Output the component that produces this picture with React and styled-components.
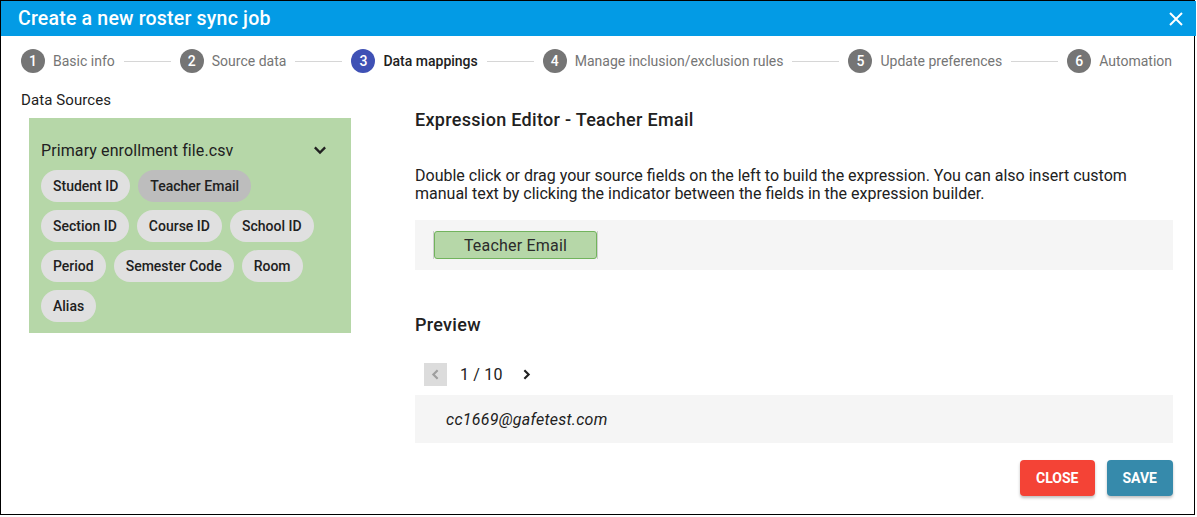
import React from 'react';
import styled, { createGlobalStyle } from 'styled-components';

const GlobalStyle = createGlobalStyle`
  * { box-sizing: border-box; }
  body {
    margin: 0;
    font-family: Roboto, "Liberation Sans", Arial, sans-serif;
    background: #fff;
    color: #212121;
  }
`;

const Dialog = styled.div`
  width: 1195px;
  height: 515px;
  border: 1px solid #000;
  display: flex;
  flex-direction: column;
  background: #fff;
`;

const Header = styled.div`
  height: 35px;
  background: #039be5;
  display: flex;
  align-items: center;
  justify-content: space-between;
  padding: 0 12px 0 17px;
  margin-right: -2px;
`;

const Title = styled.h1`
  margin: 0;
  font-size: 19.5px;
  font-weight: 500;
  letter-spacing: 0.2px;
  color: #fff;
`;

const CloseIcon = styled.button`
  border: 0;
  background: none;
  padding: 0;
  width: 16px;
  height: 16px;
  display: flex;
  cursor: pointer;
`;

const Stepper = styled.div`
  height: 50px;
  display: flex;
  align-items: center;
  padding: 0 22px 0 20px;
`;

const Step = styled.div`
  display: flex;
  align-items: center;
  gap: 8px;
  white-space: nowrap;
`;

const StepIcon = styled.span`
  width: 24px;
  height: 24px;
  border-radius: 50%;
  background: ${p => (p.active ? '#3f51b5' : '#757575')};
  color: #fff;
  font-size: 14px;
  font-weight: 500;
  display: flex;
  align-items: center;
  justify-content: center;
`;

const StepLabel = styled.span`
  font-size: 14px;
  font-weight: ${p => (p.active ? 500 : 400)};
  color: ${p => (p.active ? '#212121' : '#757575')};
`;

const Connector = styled.span`
  height: 1px;
  background: #d6d6d6;
  flex: 1 1 0;
  margin: 0 9px;
`;

const Body = styled.div`
  flex: 1;
  display: flex;
  padding: 0 21px 0 20px;
`;

const Sidebar = styled.div`
  width: 330px;
  padding-top: 5px;
`;

const SidebarTitle = styled.div`
  font-size: 15px;
  line-height: 18px;
  letter-spacing: 0.1px;
  margin-bottom: 9px;
`;

const SourcePanel = styled.div`
  margin-left: 8px;
  height: 215px;
  background: #b6d7a8;
  padding: 20px 12px 0;
`;

const SourceHeader = styled.div`
  display: flex;
  align-items: center;
  justify-content: space-between;
  height: 24px;
  margin-bottom: 8px;
  padding-right: 10px;
  font-size: 16px;
  letter-spacing: 0.1px;
  color: #212121;
`;

const ChipList = styled.div`
  display: flex;
  flex-wrap: wrap;
  gap: 8px 8px;
  padding-right: 20px;
`;

const Chip = styled.span`
  height: 32px;
  border-radius: 16px;
  padding: 0 12px;
  display: inline-flex;
  align-items: center;
  font-size: 14px;
  font-weight: 500;
  color: #212121;
  background: ${p => (p.selected ? '#bdbdbd' : '#e0e0e0')};
`;

const Main = styled.div`
  flex: 1;
  margin-left: 64px;
  padding-top: 22px;
  display: flex;
  flex-direction: column;
`;

const SectionTitle = styled.h2`
  margin: 0;
  font-size: 18px;
  line-height: 24px;
  font-weight: 500;
  letter-spacing: 0.3px;
  color: #212121;
`;

const Description = styled.p`
  margin: 35px 0 17px;
  font-size: 16px;
  line-height: 18px;
  color: #212121;
`;

const ExpressionBox = styled.div`
  height: 50px;
  background: #f5f5f5;
  display: flex;
  align-items: center;
  padding-left: 18px;
`;

const Indicator = styled.span`
  width: 1px;
  height: 28px;
  background: #cfcfcf;
`;

const ExpressionToken = styled.span`
  width: 163px;
  height: 28px;
  border: 1px solid #72b35d;
  border-radius: 3px;
  background: #b6d7a8;
  display: flex;
  align-items: center;
  justify-content: center;
  font-size: 16px;
  letter-spacing: 0.2px;
  color: #2b2b2b;
`;

const PreviewTitle = styled(SectionTitle)`
  margin-top: 43px;
`;

const Pager = styled.div`
  display: flex;
  align-items: center;
  margin: 26px 0 9px 9px;
  height: 23px;
`;

const PagerButton = styled.button`
  width: 23px;
  height: 23px;
  border: 0;
  padding: 0;
  display: flex;
  align-items: center;
  justify-content: center;
  background: ${p => (p.disabled ? '#dcdcdc' : 'transparent')};
  cursor: pointer;
`;

const PagerText = styled.span`
  font-size: 16px;
  letter-spacing: 0.2px;
  color: #212121;
  margin: 0 12px 0 13px;
`;

const PreviewBox = styled.div`
  height: 48px;
  background: #f5f5f5;
  display: flex;
  align-items: center;
  padding-left: 31px;
  font-size: 16px;
  font-style: italic;
  letter-spacing: 0.25px;
  color: #212121;
`;

const Actions = styled.div`
  display: flex;
  justify-content: flex-end;
  gap: 12px;
  margin-top: 17px;
`;

const ActionButton = styled.button`
  height: 36px;
  padding: 0 16px;
  border: 0;
  border-radius: 4px;
  background: ${p => p.color};
  color: #fff;
  font-family: inherit;
  font-size: 14px;
  font-weight: 700;
  text-transform: uppercase;
  box-shadow: 0 2px 3px rgba(0, 0, 0, 0.25);
  cursor: pointer;
`;

const steps = [
  { label: 'Basic info' },
  { label: 'Source data' },
  { label: 'Data mappings', active: true },
  { label: 'Manage inclusion/exclusion rules' },
  { label: 'Update preferences' },
  { label: 'Automation' },
];

const fields = [
  'Student ID',
  'Teacher Email',
  'Section ID',
  'Course ID',
  'School ID',
  'Period',
  'Semester Code',
  'Room',
  'Alias',
];

const Chevron = ({ dir, color = '#212121', size = 14, weight = 2 }) => {
  const d = {
    down: 'M3 5 L7 9 L11 5',
    left: 'M9 3 L5 7 L9 11',
    right: 'M5 3 L9 7 L5 11',
  }[dir];
  return (
    <svg width={size} height={size} viewBox="0 0 14 14">
      <path d={d} fill="none" stroke={color} strokeWidth={weight} />
    </svg>
  );
};

export default function App() {
  return (
    <>
      <GlobalStyle />
      <Dialog>
        <Header>
          <Title>Create a new roster sync job</Title>
          <CloseIcon aria-label="close">
            <svg width="16" height="16" viewBox="0 0 16 16">
              <path d="M2 2 L14 14 M14 2 L2 14" stroke="#fff" strokeWidth="2" />
            </svg>
          </CloseIcon>
        </Header>

        <Stepper>
          {steps.map((s, i) => (
            <React.Fragment key={s.label}>
              <Step>
                <StepIcon active={s.active}>{i + 1}</StepIcon>
                <StepLabel active={s.active}>{s.label}</StepLabel>
              </Step>
              {i < steps.length - 1 && <Connector />}
            </React.Fragment>
          ))}
        </Stepper>

        <Body>
          <Sidebar>
            <SidebarTitle>Data Sources</SidebarTitle>
            <SourcePanel>
              <SourceHeader>
                <span>Primary enrollment file.csv</span>
                <Chevron dir="down" size={18} weight={1.8} />
              </SourceHeader>
              <ChipList>
                {fields.map(f => (
                  <Chip key={f} selected={f === 'Teacher Email'}>
                    {f}
                  </Chip>
                ))}
              </ChipList>
            </SourcePanel>
          </Sidebar>

          <Main>
            <SectionTitle>Expression Editor - Teacher Email</SectionTitle>
            <Description>
              Double click or drag your source fields on the left to build the expression. You can
              also insert custom manual text by clicking the indicator between the fields in the
              expression builder.
            </Description>
            <ExpressionBox>
              <Indicator />
              <ExpressionToken>Teacher Email</ExpressionToken>
              <Indicator />
            </ExpressionBox>

            <PreviewTitle>Preview</PreviewTitle>
            <Pager>
              <PagerButton disabled>
                <Chevron dir="left" color="#9e9e9e" size={15} />
              </PagerButton>
              <PagerText>1 / 10</PagerText>
              <PagerButton>
                <Chevron dir="right" size={15} />
              </PagerButton>
            </Pager>
            <PreviewBox>cc1669@gafetest.com</PreviewBox>

            <Actions>
              <ActionButton color="#f44336">Close</ActionButton>
              <ActionButton color="#368aab">Save</ActionButton>
            </Actions>
          </Main>
        </Body>
      </Dialog>
    </>
  );
}
